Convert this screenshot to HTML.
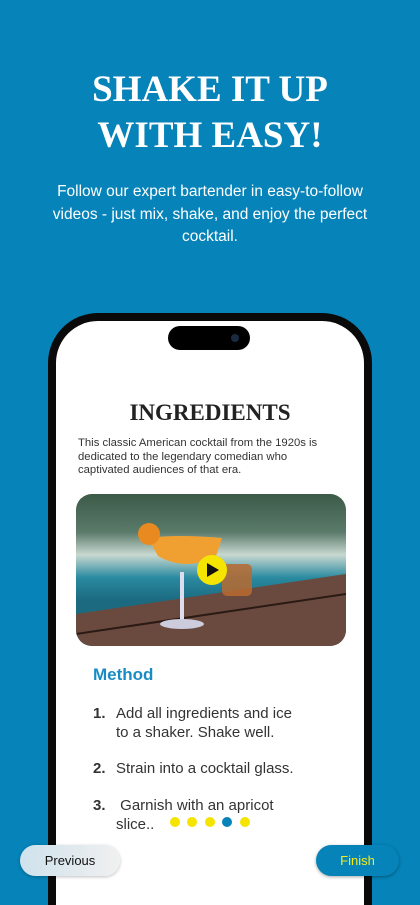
<!DOCTYPE html>
<html style="width:420px;height:905px;overflow:hidden"><head><meta charset="utf-8"><style>
*{margin:0;padding:0;box-sizing:border-box}
body{width:420px;height:905px;background:#0683b8;position:relative;overflow:hidden;font-family:"Liberation Sans",sans-serif}
.t{position:absolute;top:67px;left:0;width:420px;text-align:center;color:#fff;font-family:"Liberation Serif",serif;font-weight:bold;font-size:37px;line-height:46px}
.s{position:absolute;top:181px;left:40px;width:340px;text-align:center;color:#fff;font-size:15.5px;line-height:22.5px}
.ph{position:absolute;left:48px;top:313px;width:324px;height:592px;background:#0a0a0a;border-radius:50px 50px 0 0}
.sc{position:absolute;left:56px;top:321px;width:308px;height:584px;background:#fff;border-radius:42px 42px 0 0}
.isl{position:absolute;left:168px;top:326px;width:82px;height:24px;background:#000;border-radius:12px}
.cam{position:absolute;left:231px;top:334px;width:8px;height:8px;border-radius:50%;background:#1a2a40}
.h{position:absolute;top:400px;left:56px;width:308px;text-align:center;font-family:"Liberation Serif",serif;font-weight:bold;font-size:23px;color:#222}
.d{position:absolute;top:437px;left:78px;width:262px;font-size:11.3px;line-height:13.5px;color:#333}
.img{position:absolute;left:76px;top:494px;width:270px;height:152px;border-radius:16px;overflow:hidden;background:linear-gradient(180deg,#3c5a48 0%,#5a7a6a 25%,#c8d8d0 40%,#2a8aa0 55%,#1b6a80 70%)}
.m{position:absolute;top:665px;left:93px;color:#1a8cc4;font-weight:bold;font-size:17px}
.st{position:absolute;left:93px;font-size:15px;line-height:19px;color:#333}
.st b{color:#333;display:inline-block;width:23px}
.dot{position:absolute;top:817px;width:10px;height:10px;border-radius:50%;background:#f5e400}
.b1{position:absolute;left:20px;top:845px;width:100px;height:31px;border-radius:16px;background:linear-gradient(90deg,#cfe2ec,#f0f0f0);font-size:13px;color:#111;text-align:center;line-height:31px;box-shadow:0 1px 3px rgba(0,0,0,.25)}
.b2{position:absolute;left:316px;top:845px;width:83px;height:31px;border-radius:16px;background:#0683b8;font-size:13px;color:#f5ec1a;text-align:center;line-height:31px;box-shadow:0 1px 3px rgba(0,0,0,.35)}
</style></head><body>
<div class="t">SHAKE IT UP<br>WITH EASY!</div>
<div class="s">Follow our expert bartender in easy-to-follow videos - just mix, shake, and enjoy the perfect cocktail.</div>
<div class="ph"></div><div class="sc"></div>
<div class="isl"></div><div class="cam"></div>
<div class="h">INGREDIENTS</div>
<div class="d">This classic American cocktail from the 1920s is dedicated to the legendary comedian who captivated audiences of that era.</div>
<div class="img"><svg width="270" height="152">
<polygon points="0,120 270,80 270,152 0,152" fill="#6a4a3e"/>
<line x1="0" y1="140" x2="270" y2="100" stroke="#2a1a14" stroke-width="2"/>
<path d="M72 44 Q100 40 146 44 L140 62 Q110 78 82 62 Z" fill="#f0a030"/>
<rect x="104" y="78" width="4" height="50" fill="#dde"/>
<ellipse cx="106" cy="130" rx="22" ry="5" fill="#ccd"/>
<circle cx="73" cy="40" r="11" fill="#e88a20"/>
<rect x="146" y="70" width="30" height="32" rx="5" fill="#b86a30" opacity=".85"/>
<circle cx="136" cy="76" r="15" fill="#f5e400"/>
<polygon points="131,69 131,83 143,76" fill="#111"/>
</svg></div>
<div class="m">Method</div>
<div class="st" style="top:704px"><b>1.</b>Add all ingredients and ice<br><span style="padding-left:23px">to a shaker. Shake well.</span></div>
<div class="st" style="top:759px"><b>2.</b>Strain into a cocktail glass.</div>
<div class="st" style="top:796px"><b>3.</b>&nbsp;Garnish with an apricot<br><span style="padding-left:23px">slice..</span></div>
<div class="dot" style="left:170px"></div><div class="dot" style="left:187px"></div><div class="dot" style="left:205px"></div><div class="dot" style="left:222px;background:#0683b8"></div><div class="dot" style="left:240px"></div>
<div class="b1">Previous</div>
<div class="b2">Finish</div>
</body></html>
